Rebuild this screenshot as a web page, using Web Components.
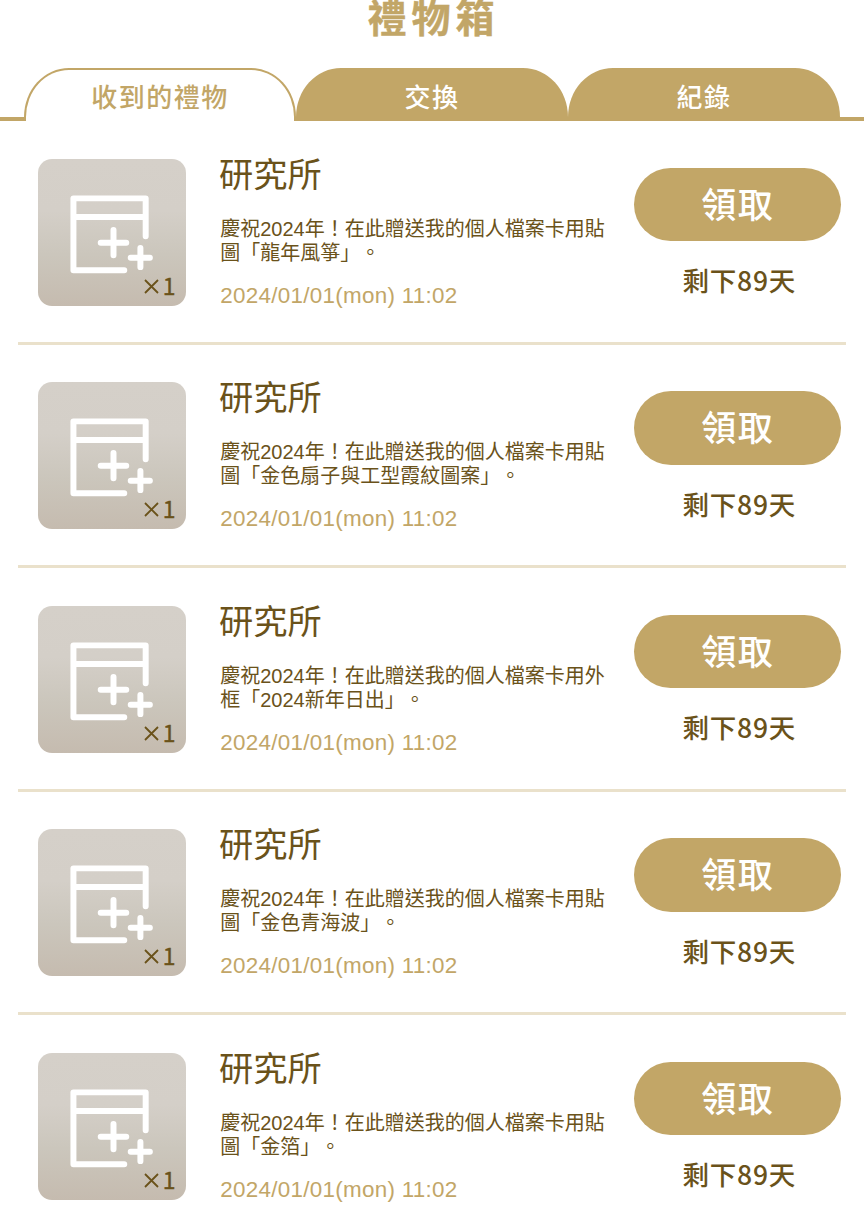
<!DOCTYPE html>
<html lang="zh-Hant">
<head>
<meta charset="UTF-8">
<meta name="viewport" content="width=device-width, initial-scale=1.0">
<title>禮物箱</title>
<style>
    :root {
        --color-gold: #c2a667;
        --color-brown: #6a521a;
        --color-line: #eae1cb;
        --font-cjk: 'Noto Sans CJK TC', sans-serif;
        --font-mixed: 'Liberation Sans', 'Noto Sans CJK TC', sans-serif;
    }

    body {
        margin: 0;
        background: #fff;
        height: 1230px;
        overflow: hidden;
        font-family: var(--font-cjk);
        text-spacing-trim: space-all;
    }
</style>
</head>
<body>
<gift-box heading="禮物箱">
    <gift-tab slot="tabs" active>收到的禮物</gift-tab>
    <gift-tab slot="tabs">交換</gift-tab>
    <gift-tab slot="tabs">紀錄</gift-tab>

    <gift-item sender="研究所" date="2024/01/01(mon) 11:02" count="1" left="剩下89天">慶祝2024年！在此贈送我的個人檔案卡用貼圖「龍年風箏」。</gift-item>
    <gift-item sender="研究所" date="2024/01/01(mon) 11:02" count="1" left="剩下89天">慶祝2024年！在此贈送我的個人檔案卡用貼圖「金色扇子與工型霞紋圖案」。</gift-item>
    <gift-item sender="研究所" date="2024/01/01(mon) 11:02" count="1" left="剩下89天">慶祝2024年！在此贈送我的個人檔案卡用外框「2024新年日出」。</gift-item>
    <gift-item sender="研究所" date="2024/01/01(mon) 11:02" count="1" left="剩下89天">慶祝2024年！在此贈送我的個人檔案卡用貼圖「金色青海波」。</gift-item>
    <gift-item sender="研究所" date="2024/01/01(mon) 11:02" count="1" left="剩下89天">慶祝2024年！在此贈送我的個人檔案卡用貼圖「金箔」。</gift-item>
</gift-box>

<script>
// Page shell: heading, tab strip and gift list
class GiftBox extends HTMLElement {
    connectedCallback() {
        if (!this.shadowRoot) {
            this.attachShadow({ mode: 'open' });
        }
        this.render();
    }

    render() {
        this.shadowRoot.innerHTML = `
            <style>
                :host {
                    display: block;
                }

                h1 {
                    margin: 0;
                    height: 68px;
                    padding-left: 3px;
                    box-sizing: border-box;
                    color: var(--color-gold);
                    font-size: 39px;
                    font-weight: 700;
                    line-height: 31px;
                    letter-spacing: 5px;
                    text-align: center;
                    -webkit-text-stroke: 0.4px var(--color-gold);
                }

                nav {
                    display: grid;
                    grid-template-columns: 24px repeat(3, 272px) 24px;
                    height: 52.5px;
                }

                nav::before,
                nav::after {
                    content: '';
                    align-self: end;
                    height: 3.5px;
                    background: var(--color-gold);
                }

                main {
                    padding: 0.5px 18px 0;
                }
            </style>
            <h1>${this.getAttribute('heading')}</h1>
            <nav><slot name="tabs"></slot></nav>
            <main><slot></slot></main>
        `;
    }
}

class GiftTab extends HTMLElement {
    connectedCallback() {
        if (!this.shadowRoot) {
            this.attachShadow({ mode: 'open' });
        }
        this.render();
    }

    render() {
        this.shadowRoot.innerHTML = `
            <style>
                :host {
                    display: flex;
                    justify-content: center;
                    box-sizing: border-box;
                    height: 52.5px;
                    padding-top: 13px;
                    border-radius: 45px 45px 0 0 / 49px 49px 0 0;
                    background: var(--color-gold);
                    color: #fff;
                    font-size: 26px;
                    font-weight: 500;
                    line-height: 30px;
                    letter-spacing: 1.5px;
                    cursor: pointer;
                }

                :host([active]) {
                    padding-top: 11px;
                    border: 2px solid var(--color-gold);
                    border-bottom: 0;
                    background: #fff;
                    color: var(--color-gold);
                }
            </style>
            <slot></slot>
        `;
    }
}

class GiftThumb extends HTMLElement {
    connectedCallback() {
        if (!this.shadowRoot) {
            this.attachShadow({ mode: 'open' });
        }
        this.render();
    }

    render() {
        this.shadowRoot.innerHTML = `
            <style>
                :host {
                    display: block;
                    position: relative;
                    width: 147.5px;
                    height: 147px;
                    border-radius: 14px;
                    background: linear-gradient(#d5d0c9 0%, #d4cfc8 35%, #cbc6bc 65%, #c5bbaf 100%);
                }

                svg {
                    display: block;
                    width: 100%;
                    height: 100%;
                }

                .count {
                    position: absolute;
                    right: 10px;
                    bottom: 8px;
                    color: var(--color-brown);
                    font-size: 23px;
                    font-weight: 400;
                    line-height: 26px;
                    -webkit-text-stroke: 0.4px var(--color-brown);
                    display: flex;
                    align-items: center;
                    gap: 4px;
                }

                .count span {
                    margin-top: -3px;
                }

                .count svg {
                    width: 15px;
                    height: 15px;
                }
            </style>
            <svg viewBox="0 0 147.5 147.5" fill="none" stroke="#fff" stroke-width="6" stroke-linecap="round" stroke-linejoin="round">
                <path d="M107.8 77.5V39.5H35.3V111.7H86.3M35.3 58.2H107.8"/>
                <path d="M75.5 71.3V96.7M62.7 84H88.3M102.5 89.3V108.5M92.8 99.2H112"/>
            </svg>
            <div class="count">
                <svg viewBox="0 0 15 15" fill="none" stroke="currentColor" stroke-width="1.8"><path d="M1 1L14 14M14 1L1 14"/></svg>
                <span>${this.getAttribute('count')}</span>
            </div>
        `;
    }
}

class ClaimButton extends HTMLElement {
    connectedCallback() {
        if (!this.shadowRoot) {
            this.attachShadow({ mode: 'open' });
        }
        this.render();
    }

    render() {
        this.shadowRoot.innerHTML = `
            <style>
                :host {
                    display: block;
                }

                button {
                    display: block;
                    width: 100%;
                    height: 73.5px;
                    padding: 0 0 3px 1px;
                    border: 0;
                    border-radius: 37px;
                    background: var(--color-gold);
                    color: #fff;
                    font: 500 35px/70px var(--font-cjk);
                    letter-spacing: 1.5px;
                    cursor: pointer;
                }
            </style>
            <button type="button"><slot></slot></button>
        `;
    }
}

// One received gift
class GiftItem extends HTMLElement {
    connectedCallback() {
        if (!this.shadowRoot) {
            this.attachShadow({ mode: 'open' });
        }
        this.render();
    }

    render() {
        this.shadowRoot.innerHTML = `
            <style>
                :host {
                    display: grid;
                    grid-template-columns: 147.5px 386px 207.5px;
                    column-gap: 34px;
                    box-sizing: border-box;
                    height: 223.5px;
                    padding: 37.5px 0 0 20px;
                    border-bottom: 3px solid var(--color-line);
                    color: var(--color-brown);
                }

                h2 {
                    margin: -7px 0 0 -0.5px;
                    font-size: 34.2px;
                    font-weight: 400;
                    line-height: 40px;
                }

                p {
                    margin: 0;
                }

                .message {
                    margin: 25px 0 0 0.7px;
                    font-family: var(--font-mixed);
                    font-size: 20px;
                    line-height: 24px;
                }

                .date {
                    margin: 16px 0 0 0.7px;
                    color: var(--color-gold);
                    font-family: var(--font-mixed);
                    font-size: 22.4px;
                    line-height: 29px;
                    letter-spacing: 0.3px;
                }

                .action {
                    padding-top: 9px;
                    margin-left: -6px;
                    margin-right: 6px;
                }

                .left {
                    margin: 23px 0 0 4px;
                    font-size: 26.5px;
                    font-weight: 500;
                    line-height: 32px;
                    letter-spacing: 0.8px;
                    text-align: center;
                }
            </style>
            <gift-thumb count="${this.getAttribute('count')}"></gift-thumb>
            <div>
                <h2>${this.getAttribute('sender')}</h2>
                <p class="message"><slot></slot></p>
                <p class="date">${this.getAttribute('date')}</p>
            </div>
            <div class="action">
                <claim-button>領取</claim-button>
                <p class="left">${this.getAttribute('left')}</p>
            </div>
        `;
    }
}

customElements.define('gift-box', GiftBox);
customElements.define('gift-tab', GiftTab);
customElements.define('gift-thumb', GiftThumb);
customElements.define('claim-button', ClaimButton);
customElements.define('gift-item', GiftItem);
</script>
</body>
</html>
